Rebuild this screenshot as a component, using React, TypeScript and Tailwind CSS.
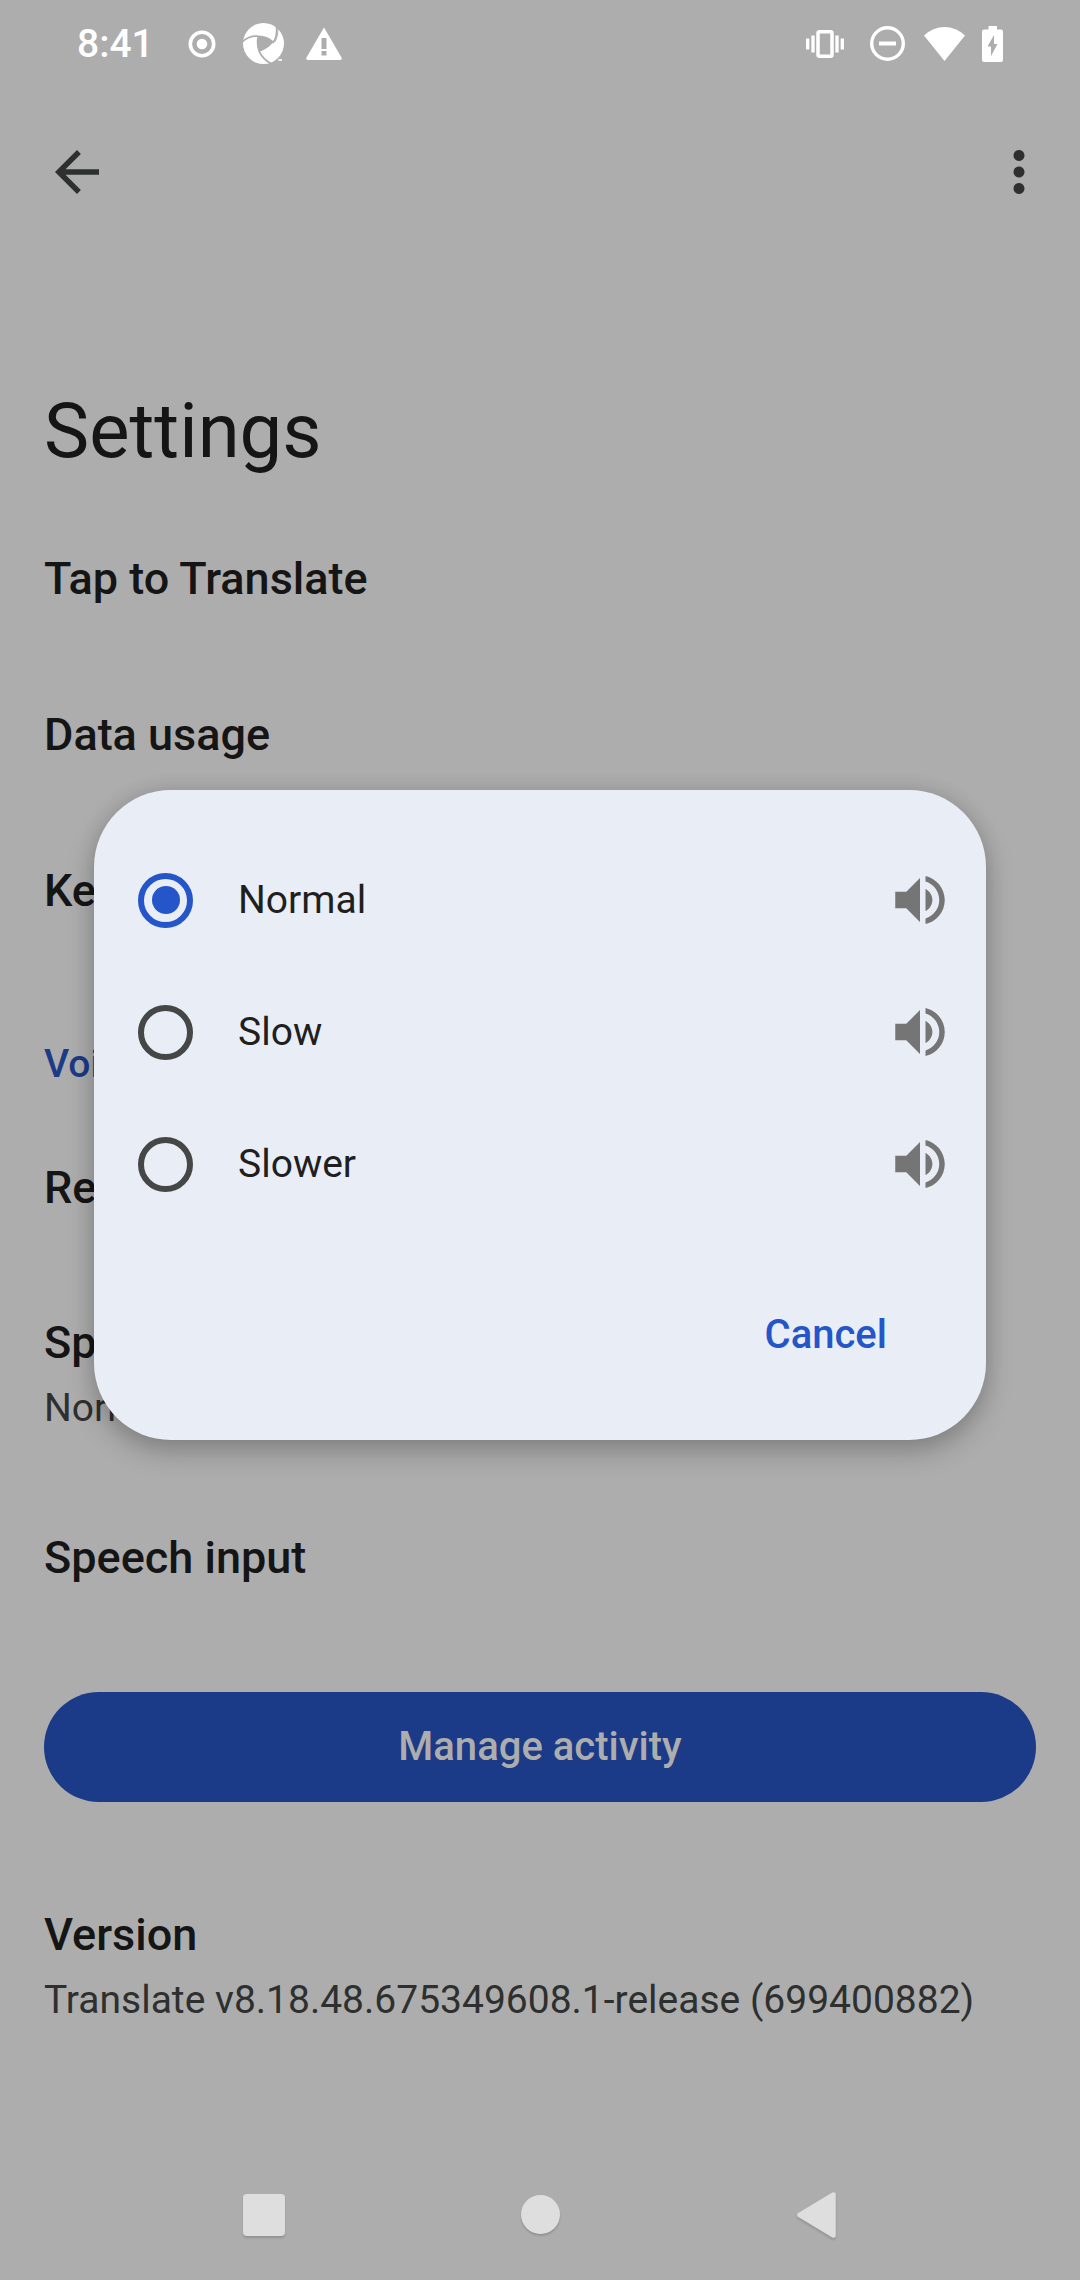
import React, { useState } from "react";

const SPEEDS = ["Normal", "Slow", "Slower"];

function StatusBar() {
  return (
    <div className="flex h-[87px] items-center justify-between px-[77px] text-white">
      <div className="flex items-center">
        <time className="text-[39px] leading-[48px] font-medium">8:41</time>
        <svg className="ml-[34px] size-7" viewBox="0 0 28 28" fill="none">
          <circle cx="14" cy="14" r="11.7" stroke="currentColor" strokeWidth="3.6" />
          <circle cx="14" cy="14" r="5.3" fill="currentColor" />
        </svg>
        <svg className="ml-[27px] size-[41px]" viewBox="0 0 123 123" fill="none">
          <circle cx="61.5" cy="61.5" r="61.5" fill="currentColor" />
          <path d="M46 40Q72 39 91 58Q72 80 49 86Q39 62 46 40Z" fill="#adadad" />
          <path
            d="M-2 56Q20 36 48 40Q72 40 91 58Q104 38 100 8M46 40Q40 62 49 86Q60 110 88 124"
            stroke="#adadad"
            strokeWidth="5"
          />
          <path d="M95 57Q105 42 105 14" stroke="#adadad" strokeWidth="3" />
          <path d="M106 111h11" stroke="currentColor" strokeWidth="5" />
        </svg>
        <svg className="ml-[22px] h-[33px] w-9" viewBox="0 0 36 33">
          <path
            d="M18 0.5L35.5 30.5Q36.500 33 34 33H2Q-0.500 33 0.500 30.500ZM15.500 11v11h5V11ZM15.500 24v4.500h5V24Z"
            fill="currentColor"
            fillRule="evenodd"
          />
        </svg>
      </div>
      <div className="flex items-center">
        <svg className="h-7 w-[38px]" viewBox="0 0 38 28" fill="none">
          <rect x="12" y="1.800" width="14" height="24.400" rx="1.500" stroke="currentColor" strokeWidth="3.500" />
          <path d="M1.700 8.500v11M7 5.500v17M31 5.500v17M36.300 8.500v11" stroke="currentColor" strokeWidth="3.300" />
        </svg>
        <svg className="ml-[26px] size-[35px]" viewBox="0 0 35 35" fill="none" stroke="currentColor">
          <circle cx="17.500" cy="17.500" r="15.800" strokeWidth="3.400" />
          <path d="M9 17.500h17" strokeWidth="4" />
        </svg>
        <svg className="ml-[19px] h-[34px] w-[41px]" viewBox="0 0 41 34">
          <path d="M0 8.500Q9 0 20.500 0T41 8.500L20.500 34Z" fill="currentColor" />
        </svg>
        <svg className="ml-[17px] h-9 w-[21px]" viewBox="0 0 21 36">
          <path
            d="M6.500 0h8.500v3.500H19Q21 3.500 21 5.500V34Q21 36 19 36H2Q0 36 0 34V5.500Q0 3.500 2 3.500H6.500ZM12 9L5.500 20.500H9V30L15.500 18H12Z"
            fill="currentColor"
            fillRule="evenodd"
          />
        </svg>
      </div>
    </div>
  );
}

function Item({ title, detail }: { title: string; detail?: string }) {
  return (
    <button
      className={
        detail
          ? "flex h-[214px] w-full flex-col justify-center gap-[10px] px-11 text-left"
          : "flex h-[156px] w-full flex-col justify-center px-11 text-left"
      }
    >
      <span className="block text-[45px] leading-[60px] font-medium text-[#151515]">{title}</span>
      {detail && <span className="block text-[39px] leading-[50px] text-[#2e302f]">{detail}</span>}
    </button>
  );
}

function SpeedDialog() {
  const [speed, setSpeed] = useState("Normal");
  return (
    <div className="absolute inset-0 flex items-center justify-center px-[94px] pb-[50px]">
      <div
        role="dialog"
        aria-modal="true"
        aria-label="Speed"
        className="w-full rounded-[77px] bg-[#e9eef6] pt-11 pb-[50px] shadow-[0_12px_28px_rgba(0,0,0,0.22),0_0_20px_rgba(0,0,0,0.1)]"
      >
        {SPEEDS.map((name) => (
          <div key={name} className="flex h-[132px] items-center pr-[33px] pl-11">
            <label className="flex flex-1 items-center gap-[45px] text-[39px] leading-[50px] text-[#1f1f1f]">
              <input
                type="radio"
                name="speed"
                value={name}
                checked={speed === name}
                onChange={() => setSpeed(name)}
                className="grid size-[55px] appearance-none place-items-center rounded-full border-[6px] border-[#444746] checked:border-[#2456c9] checked:before:size-7 checked:before:rounded-full checked:before:bg-[#2456c9] checked:before:content-['']"
              />
              {name}
            </label>
            <button aria-label={`Play ${name}`} className="size-[66px] text-[#757575]">
              <svg viewBox="0 0 24 24" fill="currentColor">
                <path d="M3 9v6h4l5 5V4L7 9H3zm13.500 3c0-1.770-1.020-3.290-2.500-4.030v8.050c1.480-.73 2.500-2.250 2.500-4.020zM14 3.230v2.060c2.890.86 5 3.540 5 6.710s-2.110 5.850-5 6.710v2.060c4.010-.91 7-4.490 7-8.770s-2.990-7.860-7-8.770z" />
              </svg>
            </button>
          </div>
        ))}
        <div className="mt-[50px] flex justify-end pr-[66px]">
          <button className="h-[110px] px-[33px] text-[40px] leading-[50px] font-medium text-[#2456c9]">
            Cancel
          </button>
        </div>
      </div>
    </div>
  );
}

function NavBar() {
  return (
    <nav className="mt-auto grid h-[131px] grid-cols-3 place-items-center px-[126px] text-[#dedede]">
      <button aria-label="Recent apps" className="size-[42px] rounded-[4px] bg-[#dedede] shadow-[0_2px_2px_rgba(0,0,0,0.15)]" />
      <button aria-label="Home" className="size-[39px] rounded-full bg-[#dedede] shadow-[0_2px_2px_rgba(0,0,0,0.15)]" />
      <button aria-label="Back" className="drop-shadow-[0_2px_1px_rgba(0,0,0,0.15)]">
        <svg className="h-[46px] w-[39px]" viewBox="0 0 39 46">
          <path
            d="M2.500 23L36.500 2.500V43.500Z"
            fill="currentColor"
            stroke="currentColor"
            strokeWidth="4.500"
            strokeLinejoin="round"
          />
        </svg>
      </button>
    </nav>
  );
}

export default function App() {
  return (
    <div className="relative flex min-h-screen flex-col bg-[#adadad] font-['Roboto',sans-serif]">
      <StatusBar />
      <header className="flex h-[169px] items-center justify-between pr-[28px] pl-11 text-[#2e302f]">
        <button aria-label="Back" className="size-[66px]">
          <svg viewBox="0 0 24 24" fill="currentColor">
            <path d="M20 11H7.830l5.590-5.590L12 4l-8 8 8 8 1.410-1.410L7.830 13H20v-2z" />
          </svg>
        </button>
        <button aria-label="More options" className="size-[66px]">
          <svg viewBox="0 0 24 24" fill="currentColor">
            <path d="M12 8c1.100 0 2-.9 2-2s-.9-2-2-2-2 .9-2 2 .9 2 2 2zm0 2c-1.100 0-2 .9-2 2s.9 2 2 2 2-.9 2-2-.9-2-2-2zm0 6c-1.100 0-2 .9-2 2s.9 2 2 2 2-.9 2-2-.9-2-2-2z" />
          </svg>
        </button>
      </header>
      <main>
        <h1 className="px-11 pt-[119px] pb-[14px] text-[76px] leading-[112px] text-[#151515]">Settings</h1>
        <Item title="Tap to Translate" />
        <Item title="Data usage" />
        <Item title="Keyboard" />
        <h2 className="px-11 pt-[71px] pb-[22px] text-[39px] leading-[48px] font-medium text-[#1b3a87]">Voice</h2>
        <Item title="Region" />
        <Item title="Speed" detail="Normal" />
        <Item title="Speech input" />
        <div className="px-11 py-14">
          <button className="h-[110px] w-full rounded-full bg-[#1b3a87] text-[40px] leading-[50px] font-medium text-[#adadad]">
            Manage activity
          </button>
        </div>
        <Item title="Version" detail="Translate v8.18.48.675349608.1-release (699400882)" />
      </main>
      <NavBar />
      <SpeedDialog />
    </div>
  );
}
